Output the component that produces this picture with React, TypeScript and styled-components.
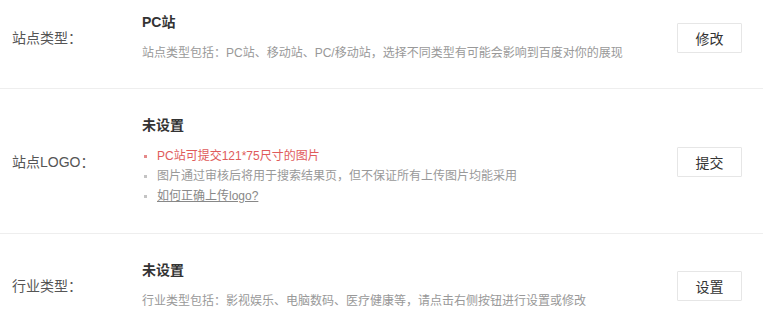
import React from "react";
import styled, { createGlobalStyle } from "styled-components";

const Global = createGlobalStyle`
  html, body { margin: 0; padding: 0; background: #fff; }
  body { font-family: "Liberation Sans", "Noto Sans CJK SC", sans-serif; color: #333; }
`;

const Page = styled.div`
  width: 763px;
  height: 319px;
  overflow: hidden;
  background: #fff;
`;

const Row = styled.div<{ $top?: number }>`
  display: flex;
  align-items: center;
  padding: ${(p) => p.$top ?? 28}px 21px 27px 12px;
  border-bottom: 1px solid #eeeeee;
`;

const Label = styled.div`
  width: 130px;
  flex-shrink: 0;
  font-size: 14px;
  color: #555;
  line-height: 20px;
`;

const Content = styled.div`
  flex: 1;
  display: flex;
  flex-direction: column;
`;

const Title = styled.div`
  font-size: 14px;
  font-weight: bold;
  color: #333;
  line-height: 16px;
`;

const Desc = styled.div`
  margin-top: 15px;
  font-size: 12px;
  color: #999;
  line-height: 16px;
`;

const List = styled.ul`
  list-style: none;
  margin: 13px 0 0;
  padding: 0;
`;

const Item = styled.li<{ $tone?: "warn" | "link" }>`
  position: relative;
  padding-left: 15px;
  font-size: 12px;
  line-height: 20px;
  color: ${(p) => (p.$tone === "warn" ? "#e05b5b" : "#999")};
  &::before {
    content: "";
    position: absolute;
    left: 2px;
    top: 9px;
    width: 3px;
    height: 3px;
    background: ${(p) => (p.$tone === "warn" ? "#e58a8a" : "#c4c4c4")};
  }
`;

const Link = styled.a`
  color: #888;
  text-decoration: underline;
  cursor: pointer;
`;

const Button = styled.button`
  width: 65px;
  height: 30px;
  flex-shrink: 0;
  background: #fff;
  border: 1px solid #e6e6e6;
  border-radius: 1px;
  font-family: "Liberation Sans", "Noto Sans CJK SC", sans-serif;
  font-size: 14px;
  color: #333;
  padding: 0;
  cursor: pointer;
`;

export default function App() {
  return (
    <Page>
      <Global />
      <Row $top={14}>
        <Label>站点类型：</Label>
        <Content>
          <Title>PC站</Title>
          <Desc>站点类型包括：PC站、移动站、PC/移动站，选择不同类型有可能会影响到百度对你的展现</Desc>
        </Content>
        <Button>修改</Button>
      </Row>
      <Row>
        <Label>站点LOGO：</Label>
        <Content>
          <Title>未设置</Title>
          <List>
            <Item $tone="warn">PC站可提交121*75尺寸的图片</Item>
            <Item>图片通过审核后将用于搜索结果页，但不保证所有上传图片均能采用</Item>
            <Item $tone="link">
              <Link>如何正确上传logo?</Link>
            </Item>
          </List>
        </Content>
        <Button>提交</Button>
      </Row>
      <Row>
        <Label>行业类型：</Label>
        <Content>
          <Title>未设置</Title>
          <Desc>行业类型包括：影视娱乐、电脑数码、医疗健康等，请点击右侧按钮进行设置或修改</Desc>
        </Content>
        <Button>设置</Button>
      </Row>
    </Page>
  );
}
